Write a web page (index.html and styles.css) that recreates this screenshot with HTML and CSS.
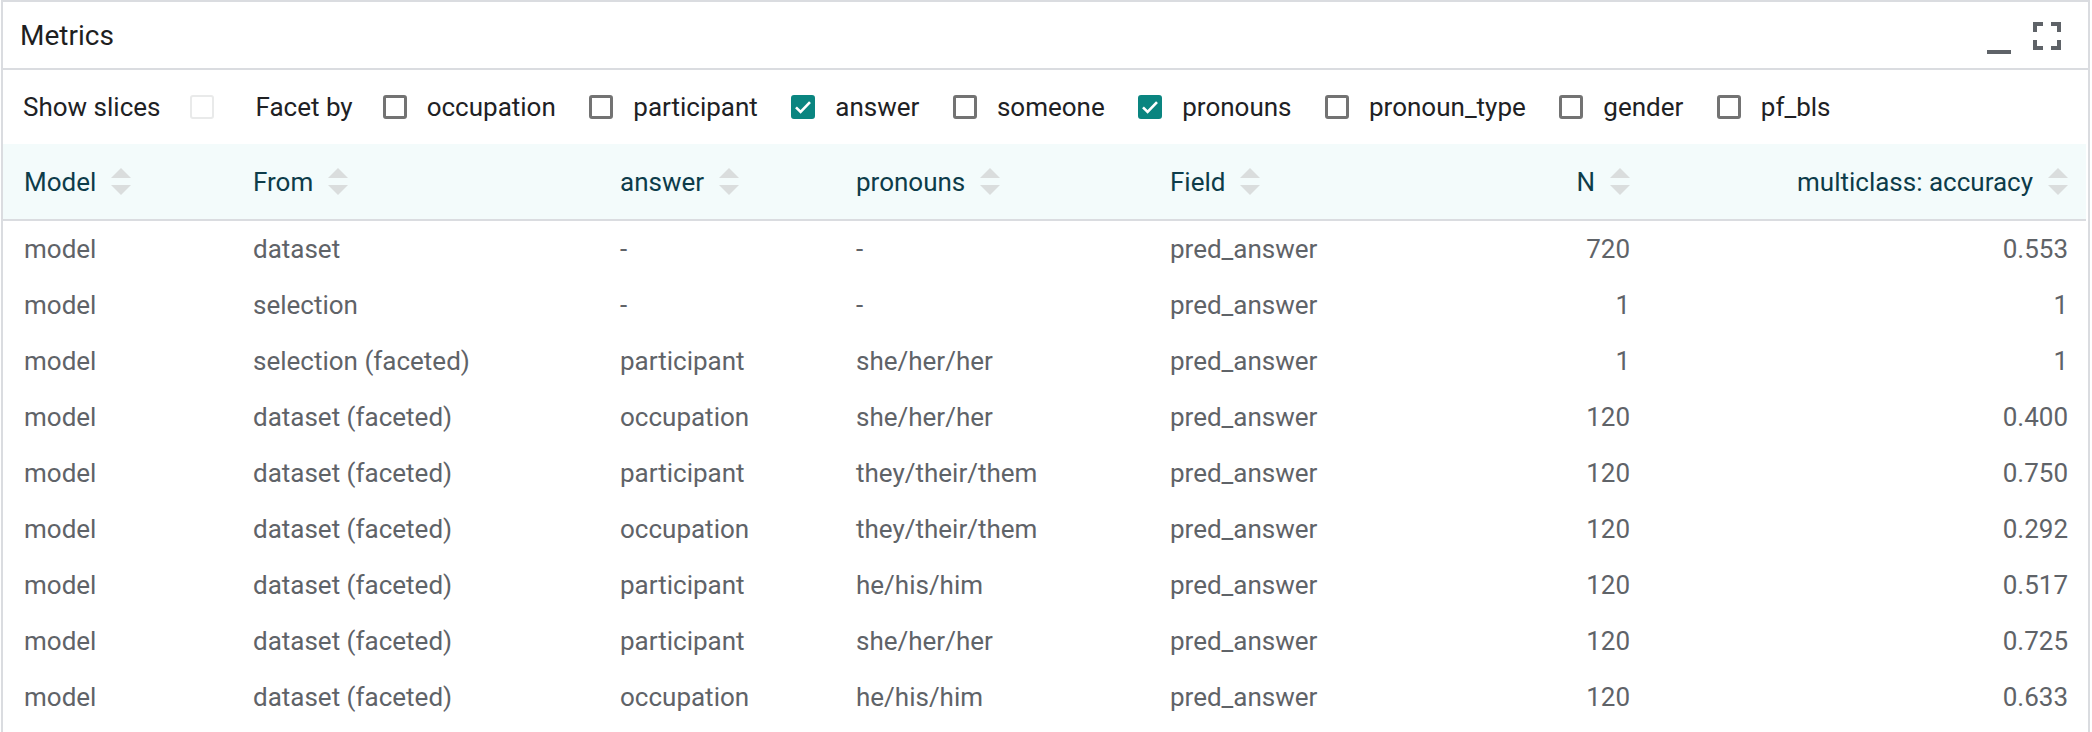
FILE: index.html
```html
<!DOCTYPE html>
<html>
<head>
<meta charset="utf-8">
<link rel="stylesheet" href="styles.css">
</head>
<body>
<div class="panel">
  <div class="titlebar">
    <span class="title">Metrics</span>
    <div class="icons">
      <svg class="icon" viewBox="0 0 24 24"><path d="M6 19h12v2H6z"/></svg>
      <svg class="icon" viewBox="0 0 24 24"><path d="M7 14H5v5h5v-2H7v-3zm-2-4h2V7h3V5H5v5zm12 7h-3v2h5v-5h-2v3zM14 5v2h3v3h2V5h-5z"/></svg>
    </div>
  </div>
  <div class="controls">
    <span class="lbl show">Show slices</span>
    <span class="box disabled"></span>
    <span class="lbl facet">Facet by</span>
    <span class="box"></span><span class="lbl opt">occupation</span>
    <span class="box"></span><span class="lbl opt">participant</span>
    <span class="box checked"><svg viewBox="0 0 24 24"><path d="M5 12.3l4.6 4.6 9.4-9.8"/></svg></span><span class="lbl opt">answer</span>
    <span class="box"></span><span class="lbl opt">someone</span>
    <span class="box checked"><svg viewBox="0 0 24 24"><path d="M5 12.3l4.6 4.6 9.4-9.8"/></svg></span><span class="lbl opt">pronouns</span>
    <span class="box"></span><span class="lbl opt">pronoun_type</span>
    <span class="box"></span><span class="lbl opt">gender</span>
    <span class="box"></span><span class="lbl opt">pf_bls</span>
  </div>
  <table class="metrics">
    <colgroup>
      <col class="c1"><col class="c2"><col class="c3"><col class="c4"><col class="c5"><col class="c6"><col class="c7">
    </colgroup>
    <thead>
      <tr>
        <th><span class="hd">Model<svg class="sort" viewBox="0 0 20 27"><polygon points="0,10 10,0 20,10"/><polygon points="0,17 20,17 10,27"/></svg></span></th>
        <th><span class="hd">From<svg class="sort" viewBox="0 0 20 27"><polygon points="0,10 10,0 20,10"/><polygon points="0,17 20,17 10,27"/></svg></span></th>
        <th><span class="hd">answer<svg class="sort" viewBox="0 0 20 27"><polygon points="0,10 10,0 20,10"/><polygon points="0,17 20,17 10,27"/></svg></span></th>
        <th><span class="hd">pronouns<svg class="sort" viewBox="0 0 20 27"><polygon points="0,10 10,0 20,10"/><polygon points="0,17 20,17 10,27"/></svg></span></th>
        <th><span class="hd">Field<svg class="sort" viewBox="0 0 20 27"><polygon points="0,10 10,0 20,10"/><polygon points="0,17 20,17 10,27"/></svg></span></th>
        <th class="num"><span class="hd">N<svg class="sort" viewBox="0 0 20 27"><polygon points="0,10 10,0 20,10"/><polygon points="0,17 20,17 10,27"/></svg></span></th>
        <th class="num last"><span class="hd">multiclass: accuracy<svg class="sort" viewBox="0 0 20 27"><polygon points="0,10 10,0 20,10"/><polygon points="0,17 20,17 10,27"/></svg></span></th>
      </tr>
    </thead>
    <tbody>
      <tr><td>model</td><td>dataset</td><td>-</td><td>-</td><td>pred_answer</td><td class="num">720</td><td class="num last">0.553</td></tr>
      <tr><td>model</td><td>selection</td><td>-</td><td>-</td><td>pred_answer</td><td class="num">1</td><td class="num last">1</td></tr>
      <tr><td>model</td><td>selection (faceted)</td><td>participant</td><td>she/her/her</td><td>pred_answer</td><td class="num">1</td><td class="num last">1</td></tr>
      <tr><td>model</td><td>dataset (faceted)</td><td>occupation</td><td>she/her/her</td><td>pred_answer</td><td class="num">120</td><td class="num last">0.400</td></tr>
      <tr><td>model</td><td>dataset (faceted)</td><td>participant</td><td>they/their/them</td><td>pred_answer</td><td class="num">120</td><td class="num last">0.750</td></tr>
      <tr><td>model</td><td>dataset (faceted)</td><td>occupation</td><td>they/their/them</td><td>pred_answer</td><td class="num">120</td><td class="num last">0.292</td></tr>
      <tr><td>model</td><td>dataset (faceted)</td><td>participant</td><td>he/his/him</td><td>pred_answer</td><td class="num">120</td><td class="num last">0.517</td></tr>
      <tr><td>model</td><td>dataset (faceted)</td><td>participant</td><td>she/her/her</td><td>pred_answer</td><td class="num">120</td><td class="num last">0.725</td></tr>
      <tr><td>model</td><td>dataset (faceted)</td><td>occupation</td><td>he/his/him</td><td>pred_answer</td><td class="num">120</td><td class="num last">0.633</td></tr>
    </tbody>
  </table>
</div>
</body>
</html>
```

FILE: styles.css
```css
html, body {
  margin: 0;
  padding: 0;
  background: #ffffff;
  overflow: hidden;
}

body {
  font-family: Roboto, "Liberation Sans", sans-serif;
}

.panel {
  box-sizing: border-box;
  width: 2089px;
  margin-left: 1px;
  border: 2px solid #dadce0;
  padding-bottom: 40px;
}

.titlebar {
  height: 66px;
  border-bottom: 2px solid #dadce0;
  display: flex;
  align-items: center;
  justify-content: space-between;
  padding: 0 17px 0 17px;
}

.title {
  font-size: 28px;
  color: #1f1f1f;
}

.icons {
  display: flex;
  align-items: center;
  margin-top: 2px;
}

.icon {
  width: 48px;
  height: 48px;
  fill: #5f6368;
  display: block;
}

.controls {
  height: 74px;
  display: flex;
  align-items: center;
  padding-left: 20px;
  font-size: 26px;
  color: #202124;
}

.lbl {
  white-space: nowrap;
}

.show {
  margin-right: 30px;
}

.facet {
  margin-left: 41px;
  margin-right: 30px;
}

.opt {
  margin-left: 20px;
  margin-right: 33.5px;
}

.box {
  box-sizing: border-box;
  width: 24px;
  height: 24px;
  border: 3px solid #737373;
  border-radius: 3px;
  flex: none;
  display: flex;
  align-items: center;
  justify-content: center;
}

.box.disabled {
  border: 2px solid #e9eaea;
}

.box.checked {
  background: #0a8580;
  border-color: #0a8580;
}

.box.checked svg {
  width: 24px;
  height: 24px;
  flex: none;
  fill: none;
  stroke: #ffffff;
  stroke-width: 2.6;
}

.metrics {
  width: 2083px;
  table-layout: fixed;
  border-collapse: collapse;
  font-size: 26px;
}

.c1 { width: 229px; }
.c2 { width: 367px; }
.c3 { width: 236px; }
.c4 { width: 314px; }
.c5 { width: 251px; }
.c6 { width: 250px; }
.c7 { width: 436px; }

.metrics th {
  background: #f3fbfb;
  height: 75px;
  padding: 0 20px 0 21px;
  text-align: left;
  font-weight: 400;
  color: #0d3c4a;
  border-bottom: 2px solid #dadce0;
  white-space: nowrap;
}

.hd {
  display: inline-flex;
  align-items: center;
}

.sort {
  width: 20px;
  height: 27px;
  margin-left: 15px;
  fill: #dadddd;
  flex: none;
}

.metrics td {
  height: 56px;
  padding: 0 20px 0 21px;
  color: #5f6368;
  white-space: nowrap;
  vertical-align: middle;
}

.metrics .num {
  text-align: right;
}

.metrics .last {
  padding-right: 18px;
}
```
